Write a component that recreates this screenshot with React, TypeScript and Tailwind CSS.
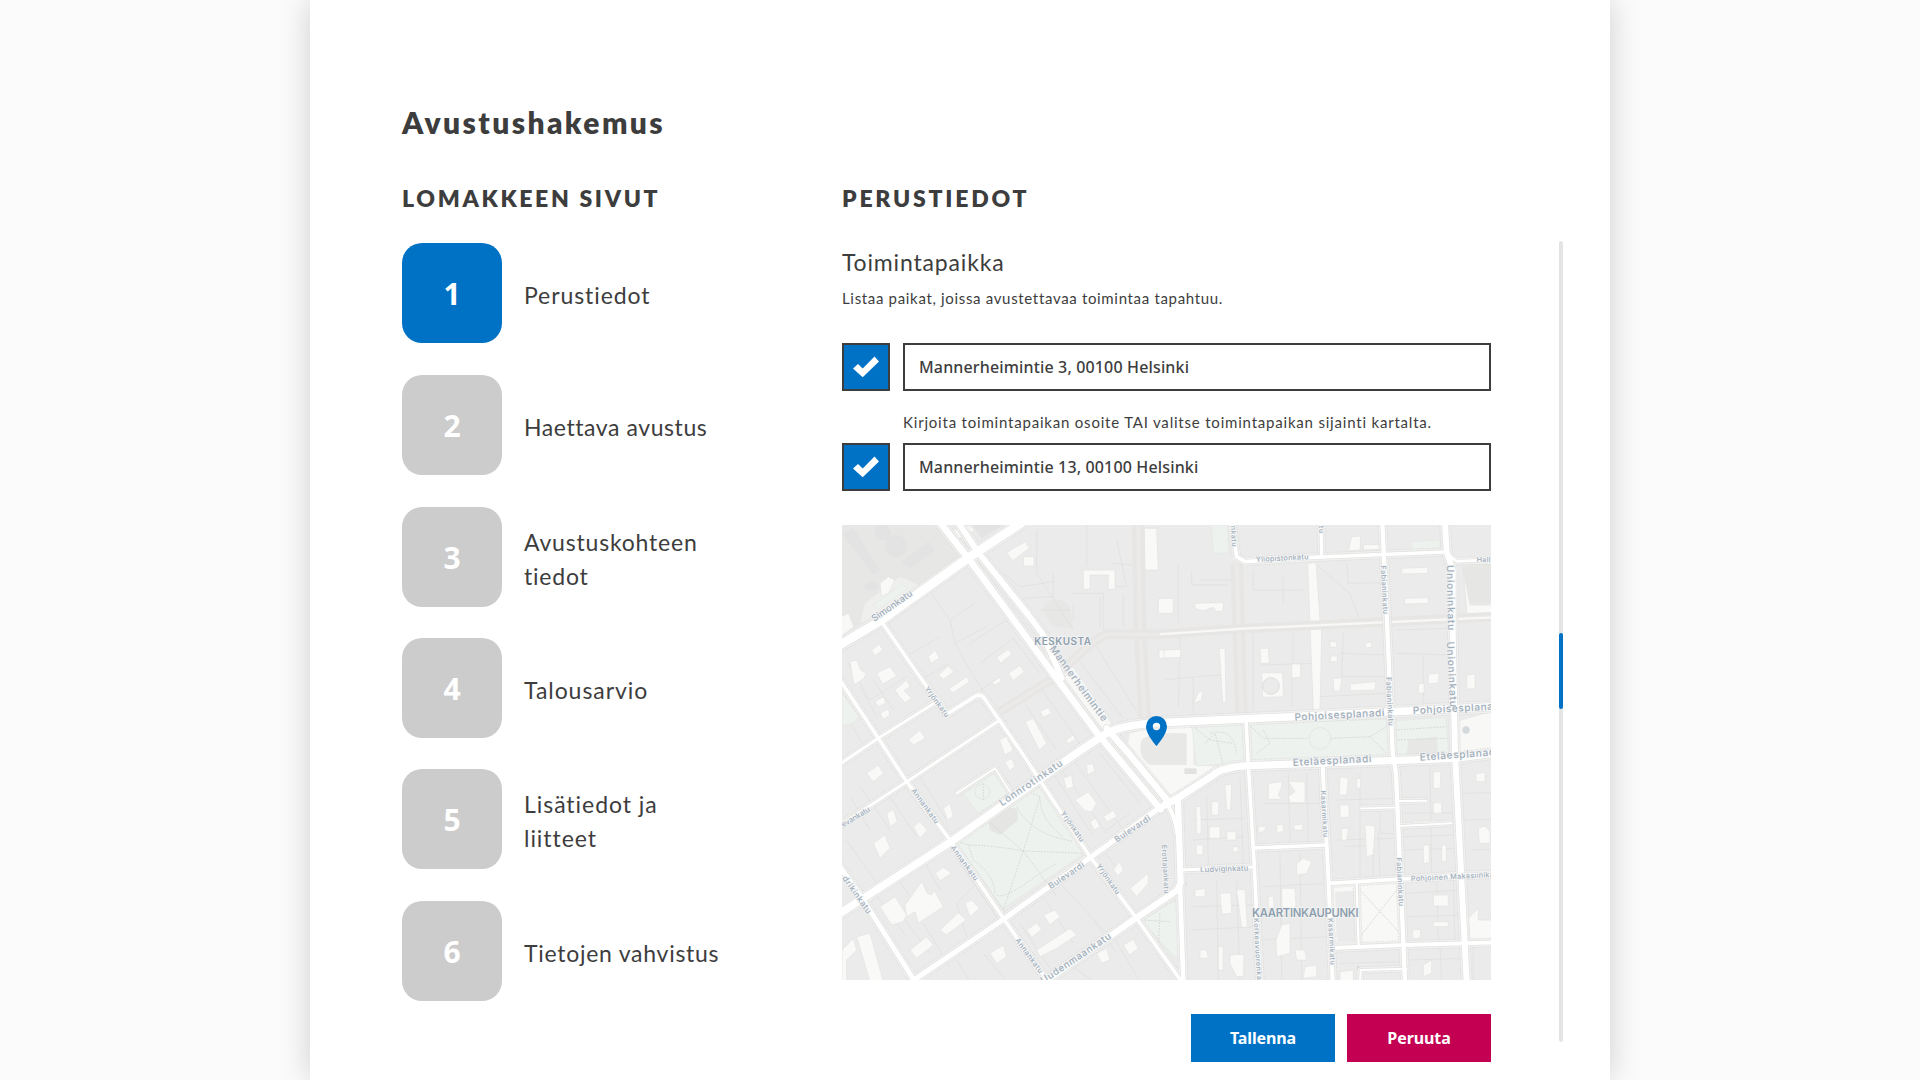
import React from "react";

const steps: { lines: string[]; spacing: string; gap: string }[] = [
  { lines: ["Perustiedot"], spacing: "tracking-[0.92px]", gap: "mb-[32px]" },
  { lines: ["Haettava avustus"], spacing: "tracking-[0.57px]", gap: "mb-[32px]" },
  { lines: ["Avustuskohteen", "tiedot"], spacing: "tracking-[0.8px]", gap: "mb-[31px]" },
  { lines: ["Talousarvio"], spacing: "tracking-[0.94px]", gap: "mb-[31px]" },
  { lines: ["Lisätiedot ja", "liitteet"], spacing: "tracking-[0.95px]", gap: "mb-[32px]" },
  { lines: ["Tietojen vahvistus"], spacing: "tracking-[0.73px]", gap: "mb-0" },
];

// Streets: [path, width]
const streets: [string, number][] = [
  ["M-20 1010L0 1040L70 1140L225 1385", 15],
  ["M-20 450L0 480L115 655L200 785L330 960L490 1195L620 1380", 11],
  ["M-20 928L0 915L200 785L480 600", 9],
  ["M-20 745L0 732L115 655L285 548", 9],
  ["M125 305L225 450L320 583L405 529Q425 518 440 545L550 705L750 1010L890 1195L1025 1385", 11],
  ["M350 820L465 745L510 815", 6],
  ["M1175 10L1190 110L1215 125L1415 112L1815 96", 11],
  ["M1443 10L1445 108", 10],
  ["M1815 96L1850 124L1960 120", 9],
  ["M1218 600L1225 735L1243 1040L1260 1385", 11],
  ["M1448 740L1465 1070L1478 1385", 12],
  ["M1627 10L1640 280L1658 700L1668 760L1695 1385", 13],
  ["M1025 1050L1240 1041", 9],
  ["M1240 984L1458 975", 11],
  ["M1468 1090L1865 1066L1960 1063", 11],
  ["M1475 1284L1695 1275L1960 1267", 12],
  ["M1675 843L1760 842", 6],
  ["M1680 918L1835 910", 6],
  ["M1020 1090L1030 1385", 14],
  ["M1550 1090L1556 1280", 7],
  ["M1560 865L1664 863", 5],
  ["M1560 1385L1562 1350L1700 1346", 6],
];

const avenues: [string, number][] = [
  ["M210 1388L490 1198L750 1013L970 855", 16],
  ["M610 1388L890 1193L1010 1112L1022 1090L1014 845", 19],
  ["M975 845Q1005 880 1014 950", 12],
  ["M-20 1193L0 1180L340 960L720 692L800 640Q850 612 980 607L1365 590L1960 560", 23],
  ["M975 855L1020 830L1120 765Q1145 742 1225 737L1845 715L1960 700", 22],
  ["M1815 10L1820 95L1838 150L1838 330L1845 700L1880 1385", 18],
  ["M-20 388L0 375L120 303L380 117L545 8", 27],
  ["M300 8L385 115L635 455L780 650L962 868", 20],
  ["M355 8L415 98L565 285L610 345L665 475", 18],
  ["M800 625L870 705L985 845", 20],
];

const promenades: [string, number][] = [
  ["M895 15L900 330L915 605", 38],
  ["M1190 130L1205 600", 38],
  ["M480 575L640 475L760 365L800 342L950 343L1205 326L1960 290", 28],
];

// Light courtyards inside the blocks.
const yards = [
  "30 425 50 420 62 450 78 460 72 475 42 495",
  "110 460 150 440 170 468 128 492", "95 390 118 372 128 390 105 408",
  "165 510 200 480 210 500 192 512 215 535 195 548 175 525",
  "105 545 130 530 138 548 115 560", "120 580 145 567 150 585 130 598",
  "265 410 285 390 298 415 272 430", "295 465 325 438 342 455 310 478",
  "325 508 380 470 388 485 340 518", "470 412 505 388 515 402 482 430",
  "505 460 540 436 553 455 520 482", "455 487 480 472 486 482 465 495",
  "500 98 555 65 568 85 518 122", "600 575 625 562 635 580 610 592",
  "555 605 580 595 620 670 598 690", "678 660 700 645 706 658 684 672",
  "478 660 500 648 520 690 495 705", "205 660 240 630 256 655 220 675",
  "730 150 825 150 825 208 805 208 805 165 750 165 750 208 730 208",
  "955 235 1000 235 1000 280 955 280", "957 390 990 390 990 415 957 415",
  "912 25 950 25 955 150 912 150", "550 110 582 110 582 138 550 138",
  "1065 250 1150 248 1150 272 1130 275 1120 262 1090 272 1065 265",
  "972 390 1022 388 1022 412 972 414", "1138 385 1155 385 1158 545 1148 548",
  "1260 385 1285 385 1288 430 1262 430", "1265 458 1328 458 1330 530 1268 532",
  "1355 432 1382 432 1382 472 1355 474", "1060 550 1075 518 1088 512 1085 540",
  "1470 365 1490 365 1490 382 1470 382", "1472 408 1492 408 1492 425 1472 425",
  "1577 368 1595 366 1595 382 1577 384", "1480 475 1505 475 1500 512 1482 514",
  "1530 492 1608 485 1605 510 1532 512", "1685 145 1763 142 1763 160 1685 162",
  "1694 235 1765 233 1765 250 1694 252", "1765 462 1797 460 1795 488 1765 492",
  "1735 492 1752 490 1752 518 1735 520", "1880 465 1905 462 1905 505 1880 508",
  "1535 50 1562 48 1560 90 1525 92", "1570 75 1620 73 1620 88 1570 90",
  "1403 130 1428 128 1440 300 1445 340 1440 570 1420 572", "1870 150 1882 290 1960 285 1960 255 1890 255",
  "120 190 145 170 165 180 145 220 125 230", "340 30 385 15 405 30 350 60",
  "80 760 115 735 130 760 100 785", "140 880 160 868 172 905 150 920",
  "100 970 135 945 150 985 120 1015", "220 920 240 905 262 930 240 955",
  "310 865 330 850 340 890 322 900", "195 1155 245 1085 262 1120 275 1125 282 1110 310 1160 235 1210 225 1175 200 1190",
  "120 1160 165 1130 200 1185 190 1205 155 1215", "285 1060 310 1042 335 1060 300 1082",
  "375 1150 395 1140 418 1165 390 1190", "300 1230 355 1178 378 1200 320 1245",
  "210 1290 260 1250 280 1275 230 1315", "610 1185 645 1170 660 1190 630 1215",
  "560 1230 590 1208 605 1228 575 1252", "590 1290 690 1225 710 1245 650 1285 600 1310",
  "705 840 745 815 770 850 755 875 735 872", "750 905 768 895 780 920 762 930",
  "670 775 695 765 700 800 680 808", "740 735 758 730 765 752 742 765",
  "790 890 820 870 830 890 802 905", "495 725 515 715 525 740 508 752",
  "870 1105 925 1060 925 1090 890 1130", "820 1050 838 1025 850 1050 835 1068",
  "850 1275 880 1258 895 1285 868 1305", "450 1300 490 1275 500 1310 470 1330",
  "50 1250 90 1240 130 1385 90 1385", "6 1290 40 1255 50 1290 20 1320 20 1385 6 1385",
  "770 1300 800 1285 810 1320 785 1330",
  "1068 860 1082 860 1084 940 1070 942", "1108 920 1140 920 1140 955 1108 955",
  "1155 795 1175 793 1172 870 1160 870", "1115 845 1137 845 1135 885 1115 885",
  "1160 935 1188 935 1188 960 1160 960", "1068 975 1090 975 1088 1005 1070 1005",
  "1178 980 1195 980 1195 995 1178 995", "1285 790 1325 785 1325 800 1315 825 1325 838 1285 838",
  "1345 785 1395 785 1395 848 1350 848 1345 830 1365 815", "1310 915 1330 912 1330 935 1310 938",
  "1362 915 1388 912 1388 930 1362 930", "1255 920 1280 918 1270 935 1255 938",
  "1500 770 1525 775 1520 825 1498 825", "1550 775 1562 775 1562 805 1550 805",
  "1500 855 1527 855 1527 892 1500 892", "1505 925 1525 925 1520 960 1505 962",
  "1575 915 1605 918 1600 1005 1580 1010", "1780 755 1803 755 1800 805 1780 805",
  "1780 848 1805 848 1805 880 1780 880", "1718 902 1797 900 1797 922 1718 924",
  "1750 975 1768 975 1768 1028 1750 1030", "1805 975 1818 975 1820 1025 1805 1025",
  "1908 760 1935 758 1935 785 1908 785", "1915 925 1935 918 1950 935 1950 970 1918 970",
  "1325 1105 1365 1105 1368 1160 1345 1170 1325 1160", "1370 1030 1390 1015 1415 1025 1400 1060 1370 1065",
  "1065 1110 1095 1105 1095 1130 1065 1130", "1140 1120 1172 1118 1175 1180 1145 1182",
  "1190 1110 1215 1108 1222 1222 1205 1222", "1080 1290 1100 1290 1105 1315 1080 1315",
  "1135 1280 1150 1280 1150 1350 1135 1350", "1170 1305 1212 1303 1210 1370 1190 1370 1170 1330",
  "1325 1215 1350 1210 1350 1300 1310 1310 1308 1260", "1365 1290 1395 1290 1400 1320 1370 1320",
  "1395 1340 1430 1335 1430 1370 1390 1375", "1285 1130 1300 1128 1302 1165 1285 1165",
  "1780 1125 1825 1125 1825 1158 1780 1158", "1780 1205 1825 1205 1825 1220 1780 1220",
  "1718 1230 1742 1228 1740 1255 1718 1255", "1885 1195 1915 1165 1915 1200 1960 1200 1960 1260 1890 1260",
  "1750 1335 1775 1320 1775 1360 1750 1370", "1500 1355 1540 1350 1540 1385 1500 1385",
];

const seams =
  "M150 330L205 405L300 350M205 405L260 480M270 215L330 300L405 250M330 300L345 370L440 320M345 370L390 450M390 450L470 580M390 370L500 300M420 430L520 355M520 355L600 460M400 525L480 470M60 500L110 590M100 480L160 570M25 430L90 540L200 470M160 350L240 480L330 430M30 610L80 690M490 160L540 200L640 185M545 235L640 230L640 160M740 15L740 140M830 60L860 200L830 200M700 220L790 220L790 330M700 250L700 300M880 135L820 130M590 30L590 160L700 330M600 270L690 270M780 230L780 320M850 225L850 320M700 400L850 595M760 365L900 590M640 480L760 640M600 500L740 700M560 560L650 690M1055 150L1055 195L1165 195M1080 180L1190 180M1015 130L1015 310M1240 150L1240 210L1390 210M1330 170L1330 250M1430 135L1530 220L1555 290M1525 190L1640 188M1520 130L1525 190M1500 400L1640 405M1510 340L1505 470L1640 470M1440 530L1640 520M1670 400L1830 405M1750 405L1750 550M1670 330L1830 325M1020 350L1015 560M1070 470L1150 465M1360 340L1355 560M1260 435L1430 430M1240 340L1240 570M975 480L1060 470L1060 600M30 830L90 930M60 800L150 930M240 770L320 900M20 960L110 1090M150 830L230 950M90 1100L200 1250M160 1060L240 1170M240 1000L300 1110M340 1000L470 1190M250 1210L330 1340M400 1100L350 1150L380 1250M270 1300L180 1180M610 1130L700 1270M660 1090L800 1240M540 1210L640 1360M790 990L840 1060M800 930L870 880M640 760L760 950M700 720L850 930M650 730L800 940M780 700L900 850M430 1300L500 1385M350 1320L390 1385M700 1340L760 1385M820 1250L900 1385M760 1200L830 1300M1100 830L1105 1035M1200 770L1210 1030M1060 900L1215 895M1060 960L1215 950M1270 850L1450 850M1345 760L1350 970M1400 760L1405 965M1490 840L1665 835M1560 760L1560 1080M1490 960L1660 955M1615 930L1620 1080M1690 880L1850 878M1770 740L1775 1060M1690 990L1860 985M1690 950L1850 945M1870 820L1960 818M1870 900L1960 898M1900 990L1960 988M1060 1160L1240 1155M1060 1230L1250 1220M1130 1080L1135 1380M1190 1080L1200 1380M1270 1100L1460 1090M1270 1190L1460 1180M1270 1260L1470 1250M1380 1000L1385 1380M1320 1000L1325 1380M1700 1120L1870 1110M1700 1190L1870 1185M1790 1080L1795 1260M1840 1080L1845 1260M1710 1320L1880 1315M1800 1280L1805 1380M1500 1330L1700 1325M1900 1280L1900 1380M1620 880L1620 940L1660 940M1510 980L1600 975L1600 1080";

const footpaths =
  "M345 962L385 975Q450 975 550 993L735 1000M550 993L490 1170M550 993L600 830L560 810M550 993L650 1130M550 993L440 900M385 975L400 1020Q460 1060 465 1120Q480 1150 600 1060L650 1030M530 860Q560 920 640 950L700 965M600 830Q600 900 670 950M430 790L430 840M1060 620L1110 660L1180 670M1095 670L1125 640L1150 735M1110 640Q1180 620 1190 700M1225 612L1270 655L1400 655M1475 655L1590 650L1640 620M1590 650L1640 700M1250 700L1290 670L1270 630M1560 1110L1680 1240M1560 1250L1670 1110M1665 630L1820 620M1665 660L1820 655M905 1200L990 1205M960 1180L955 1280L1020 1360M450 630L500 600";

const labels: [string, number, number, number, number, number][] = [
  // text, x, y, rotation, size, length
  ["Simonkatu", 103, 306, -35, 28, 142],
  ["Mannerheimintie", 628, 386, 54, 30, 272],
  ["Yrjönkatu", 253, 506, 54, 22, 108],
  ["Yrjönkatu", 661, 880, 55, 22, 106],
  ["Yrjönkatu", 768, 1038, 55, 22, 106],
  ["Annankatu", 213, 812, 54, 22, 124],
  ["Annankatu", 331, 983, 54, 22, 124],
  ["Annankatu", 525, 1261, 54, 22, 124],
  ["Lönnrotinkatu", 486, 859, -34, 29, 222],
  ["Bulevardi", 831, 968, -34, 25, 124],
  ["Bulevardi", 632, 1108, -34, 25, 124],
  ["Uudenmaankatu", 610, 1392, -34, 29, 248],
  ["evankatu", 10, 922, -31, 23, 96],
  ["drikinkatu", 6, 1075, 55, 25, 132],
  ["Erottajankatu", 965, 975, 87, 21, 146],
  ["nkatu", 1172, 18, 86, 21, 62],
  ["tu", 1436, 18, 86, 21, 22],
  ["Yliopistonkatu", 1248, 126, -3, 22, 158],
  ["Fabianinkatu", 1622, 137, 87, 22, 146],
  ["Fabianinkatu", 1638, 472, 87, 22, 146],
  ["Fabianinkatu", 1669, 1013, 87, 22, 146],
  ["Unioninkatu", 1820, 135, 89, 30, 196],
  ["Unioninkatu", 1820, 365, 87, 30, 196],
  ["Hall", 1910, 127, -2, 22, 42],
  ["Pohjoisesplanadi", 1364, 602, -3, 30, 270],
  ["Pohjoisesplanadi", 1719, 582, -3, 30, 270],
  ["Eteläesplanadi", 1359, 738, -3, 30, 236],
  ["Eteläesplanadi", 1740, 722, -4, 30, 236],
  ["Ludviginkatu", 1081, 1057, -2, 23, 144],
  ["Kasarmikatu", 1442, 812, 87, 21, 140],
  ["Kasarmikatu", 1464, 1195, 87, 21, 140],
  ["Korkeavuorenkatu", 1241, 1195, 87, 21, 208],
  ["Pohjoinen Makasiinikatu", 1713, 1084, -3, 22, 272],
];

function CityMap() {
  return (
    <svg className="block h-[455px] w-[649px]" viewBox="6 15 1947 1365" preserveAspectRatio="none" fill="none">
      <rect width="1960" height="1390" fill="#ebebeb" />
      <path d="M6 15H300L375 105L30 330L6 300Z" fill="#e7e7e6" />
      <g fill="#e3e3e3">
        <path d="M6 40L40 25L120 150L100 165ZM185 125L265 65L285 90L210 145Z" />
        <circle cx="168" cy="78" r="33" />
        <circle cx="128" cy="38" r="24" />
        <ellipse cx="95" cy="200" rx="22" ry="13" />
        <path d="M395 15H490L425 55Z" />
      </g>
      <path d="M1865 140L1960 130V250H1885Z" fill="#e6e6e5" />
      <path d="M605 270Q640 210 690 260L700 325L640 320Z" fill="#e7e7e6" />

      {/* open ground */}
      <g fill="#f8f8f6">
        <path d="M870 640L980 615L1060 612V735L1130 740L1010 825L985 825L860 690Z" />
        <path d="M1850 605L1960 575V695L1850 705Z" />
        <path d="M1480 1095L1685 1085L1700 1272L1480 1282Z" />
        <path d="M670 470L690 430L820 620L790 630Z" />
        <path d="M75 250L180 170L235 195L215 225L115 290L60 310Z" fill="#efefed" />
        <path d="M6 290L25 282L40 320L6 345Z" />
      </g>
      <path d="M1485 1115L1545 1112L1548 1265L1490 1268Z" fill="#ebebeb" />
      <path d="M905 660Q930 635 1040 640V735H930Q890 710 905 660Z" fill="#e8e8e7" />
      <path d="M1033 745H1070V762H1033Z" fill="#e2e2e1" />

      {/* parks */}
      <g fill="#edf2ee" stroke="#e4e8e4" strokeWidth="2">
        <path d="M1055 614L1640 598L1655 712L1225 726L1070 738Z" />
        <path d="M1665 602L1818 592L1826 704L1668 712Z" />
        <path d="M345 962L560 812L605 802L735 998L490 1165Z" />
        <path d="M370 820L460 758L505 820L415 880Z" />
        <path d="M905 1203L990 1150L1020 1140L1026 1330L985 1290Z" />
        <path d="M6 518L58 590L30 615H6Z" />
        <path d="M100 255L185 192L205 205L115 268Z" />
        <path d="M1115 15H1165V100H1120Z" />
        <path d="M915 40H950V150H918Z" />
        <path d="M1715 65L1800 60V95H1718Z" />
      </g>
      <path d="M440 890L470 865L530 865L535 900L480 945L450 930Z" fill="#e5e5e4" />
      <path d="M1705 660L1790 650L1795 705H1700Z" fill="#e7e7e6" />

      <path d={seams} stroke="#dededd" strokeWidth="2" />

      <g fill="#f9f9f7" stroke="#e3e3e1" strokeWidth="2">
        {yards.map((p) => (
          <polygon key={p} points={p} />
        ))}
      </g>
      <circle cx="1293" cy="498" r="25" fill="#ebebeb" stroke="#dededd" strokeWidth="3" />
      <circle cx="1440" cy="655" r="32" stroke="#dcdfdc" strokeWidth="3" strokeDasharray="4 3" />
      <circle cx="427" cy="815" r="22" stroke="#dcdfdc" strokeWidth="3" strokeDasharray="4 3" />
      <path d={footpaths} stroke="#d6d9d6" strokeWidth="3" strokeDasharray="5 4" />

      {promenades.map(([d, w]) => (
        <g key={d}>
          <path d={d} stroke="#e7e6e4" strokeWidth={w} />
          <path d={d} stroke="#ebeae8" strokeWidth={w * 0.35} />
        </g>
      ))}
      <path d="M960 343L1205 326L1960 292" stroke="#f8f8f7" strokeWidth="6" />

      {[...streets, ...avenues].map(([d, w]) => (
        <path key={d} d={d} stroke="#d7d7d6" strokeWidth={w + 17} strokeDasharray="3 4" />
      ))}
      {[...streets, ...avenues].map(([d, w]) => (
        <path key={d} d={d} stroke="#f0f0ef" strokeWidth={w + 12} strokeLinejoin="round" />
      ))}
      {[...streets, ...avenues].map(([d, w]) => (
        <path key={d} d={d} stroke="#e0e0df" strokeWidth={w + 4} strokeLinejoin="round" strokeLinecap="round" />
      ))}
      {[...streets, ...avenues].map(([d, w]) => (
        <path key={d} d={d} stroke="#ffffff" strokeWidth={w} strokeLinejoin="round" strokeLinecap="round" />
      ))}
      <circle cx="1878" cy="630" r="11" fill="#d3d9dd" />

      <g
        fill="#a0aebb"
        stroke="#f6f6f6"
        strokeWidth="4"
        paintOrder="stroke"
        fontFamily="Inter, 'Noto Sans', sans-serif"
        fontWeight="500"
      >
        {labels.map(([t, x, y, r, size, len]) => (
          <text key={t + x + y} transform={`translate(${x} ${y}) rotate(${r})`} fontSize={size} textLength={len}>
            {t}
          </text>
        ))}
        <g fill="#8e9fae" fontWeight="600">
          <text x="583" y="374" fontSize="30" textLength="170">KESKUSTA</text>
          <text x="1236" y="1190" fontSize="34" textLength="320">KAARTINKAUPUNKI</text>
        </g>
      </g>
    </svg>
  );
}

function AddressRow({ value }: { value: string }) {
  return (
    <div className="flex h-12 gap-[13px]">
      <div className="flex w-12 shrink-0 items-center justify-center border-2 border-[#3d3d3d] bg-[#0072c6]">
        <svg className="h-[22px] w-[26px]" viewBox="0 0 26 22">
          <path d="M0 12.6L5 8.1L9.7 12.5L21.5 0.6L26 5.5L9.7 21.3Z" fill="#fff" />
        </svg>
      </div>
      <div className="flex grow items-center border-2 border-[#3d3d3d] bg-white pl-3.5 font-['Noto_Sans'] text-base font-medium tracking-[0.15px]">
        {value}
      </div>
    </div>
  );
}

export default function App() {
  return (
    <div className="h-[1080px] w-full overflow-hidden bg-[#fbfbfb] font-['Lato',sans-serif] text-[#3d3d3d]">
      <main className="mx-auto h-[1080px] w-[1300px] bg-white pt-[102px] pl-[92px] shadow-[0_0_30px_rgba(0,0,0,0.18)]">
        <h1 className="text-[30px] leading-[40px] font-extrabold tracking-[2.4px]">Avustushakemus</h1>
        <div className="mt-[41px] flex">
          <section className="w-[440px]">
            <h2 className="text-[23px] leading-[30px] font-extrabold tracking-[2.66px]">LOMAKKEEN SIVUT</h2>
            <ol className="mt-[30px]">
              {steps.map(({ lines, spacing, gap }, i) => (
                <li key={lines[0]} className={`flex h-[100px] items-center gap-[22px] ${gap}`}>
                  <div
                    className={`flex size-[100px] items-center justify-center rounded-[20px] pt-px font-['Noto_Sans'] text-[30px] font-bold text-white ${
                      i === 0 ? "bg-[#0072c6]" : "bg-[#cccccc]"
                    }`}
                  >
                    {i + 1}
                  </div>
                  <div className={`pt-[3px] text-[23px] leading-[34px] ${spacing}`}>
                    {lines.map((l) => (
                      <div key={l}>{l}</div>
                    ))}
                  </div>
                </li>
              ))}
            </ol>
          </section>

          <section className="w-[649px]">
            <h2 className="text-[23px] leading-[30px] font-extrabold tracking-[2.76px]">PERUSTIEDOT</h2>
            <h3 className="mt-[34px] text-[23px] leading-[30px] tracking-[0.84px]">Toimintapaikka</h3>
            <p className="mt-[11px] text-[15px] leading-[20px] tracking-[0.67px]">
              Listaa paikat, joissa avustettavaa toimintaa tapahtuu.
            </p>
            <div className="mt-[35px]">
              <AddressRow value="Mannerheimintie 3, 00100 Helsinki" />
            </div>
            <p className="mt-[21px] mb-[11px] pl-[61px] text-[15px] leading-[20px] tracking-[0.8px] whitespace-nowrap">
              Kirjoita toimintapaikan osoite TAI valitse toimintapaikan sijainti kartalta.
            </p>
            <AddressRow value="Mannerheimintie 13, 00100 Helsinki" />
            <div className="relative mt-[34px]">
              <CityMap />
              <svg className="absolute top-[191px] left-[304px] h-[30px] w-[21px]" viewBox="0 0 21 30">
                <path
                  fillRule="evenodd"
                  fill="#0072c6"
                  d="M10.5 0A10.5 10.5 0 0 1 21 10.5C21 18.4 10.5 30 10.5 30S0 18.4 0 10.5A10.5 10.5 0 0 1 10.5 0ZM10.5 6.8A3.7 3.7 0 1 0 10.5 14.2A3.7 3.7 0 1 0 10.5 6.8Z"
                />
              </svg>
            </div>
            <div className="mt-[34px] flex justify-end gap-3 font-['Noto_Sans'] text-base font-bold text-white">
              <button className="h-12 w-36 bg-[#0072c6] tracking-[-0.1px]">Tallenna</button>
              <button className="h-12 w-36 bg-[#c40053] tracking-[-0.1px]">Peruuta</button>
            </div>
          </section>

          <div className="mt-[58px] ml-[68px] h-[801px] w-1 rounded-full bg-[#e4e4e4] pt-[392px]">
            <div className="h-[76px] rounded-full bg-[#0072c6]" />
          </div>
        </div>
      </main>
    </div>
  );
}
